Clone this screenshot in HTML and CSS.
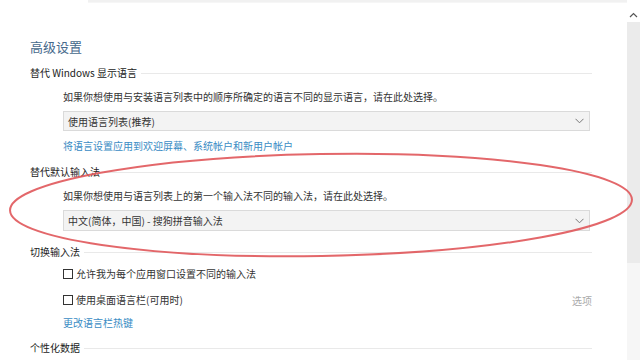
FILE: index.html
```html
<!DOCTYPE html>
<html lang="zh-CN">
<head>
<meta charset="utf-8">
<title>高级设置</title>
<link rel="stylesheet" href="styles.css">
</head>
<body>
<div class="window">
  <main class="main">
    <div class="topstrip"></div>
    <h1 class="title">高级设置</h1>

    <div class="group-head"><span>替代 Windows 显示语言</span><i class="rule"></i></div>
    <p class="desc">如果你想使用与安装语言列表中的顺序所确定的语言不同的显示语言，请在此处选择。</p>
    <div class="select s1"><span>使用语言列表(推荐)</span>
      <svg class="chev" width="9" height="6" viewBox="0 0 9 6"><path d="M0.5 0.8 L4.5 4.8 L8.5 0.8" fill="none" stroke="#777" stroke-width="1"/></svg>
    </div>
    <a class="link l1">将语言设置应用到欢迎屏幕、系统帐户和新用户帐户</a>

    <div class="group-head g2"><span>替代默认输入法</span><i class="rule"></i></div>
    <p class="desc">如果你想使用与语言列表上的第一个输入法不同的输入法，请在此处选择。</p>
    <div class="select s2"><span>中文(简体，中国) - 搜狗拼音输入法</span>
      <svg class="chev" width="9" height="6" viewBox="0 0 9 6"><path d="M0.5 0.8 L4.5 4.8 L8.5 0.8" fill="none" stroke="#777" stroke-width="1"/></svg>
    </div>

    <div class="group-head g3"><span>切换输入法</span><i class="rule"></i></div>
    <label class="check c1"><i class="box"></i><span>允许我为每个应用窗口设置不同的输入法</span></label>
    <div class="check-row">
      <label class="check c2"><i class="box"></i><span>使用桌面语言栏(可用时)</span></label>
      <span class="options">选项</span>
    </div>
    <a class="link l2">更改语言栏热键</a>

    <div class="group-head g4"><span>个性化数据</span><i class="rule"></i></div>
  </main>
  <aside class="scrollbar">
    <div class="arrow">
      <svg width="9" height="6" viewBox="0 0 9 6"><path d="M1 5 L4.5 1.5 L8 5" fill="none" stroke="#555" stroke-width="1.2"/></svg>
    </div>
    <div class="thumb"></div>
    <div class="track"></div>
  </aside>
  <svg class="mark" width="640" height="360" viewBox="0 0 640 360">
    <ellipse cx="321" cy="205" rx="311" ry="51" transform="rotate(-1 321 205)" fill="none" stroke="#e0565a" stroke-width="2" stroke-opacity="0.9"/>
  </svg>
</div>
</body>
</html>
```

FILE: styles.css
```css
* { box-sizing: border-box; }
html, body { margin: 0; padding: 0; background: #fff; }
body {
  font-family: "Noto Sans CJK SC", "Noto Sans", "Liberation Sans", sans-serif;
  font-size: 10px;
  color: #333;
}
.window {
  position: relative;
  width: 640px;
  height: 360px;
  overflow: hidden;
  display: flex;
}
.main {
  flex: 1;
  padding: 0 35px 0 30px;
  display: flex;
  flex-direction: column;
}
.topstrip {
  height: 3px;
  margin: 0 -40px 0 58px;
  background: #f1f1f1;
  border-bottom: 1px solid #f6f6f6;
}
.title {
  margin: 34px 0 0;
  font-size: 13px;
  line-height: 20px;
  font-weight: normal;
  color: #46698c;
}
.group-head {
  display: flex;
  align-items: center;
  height: 16px;
  line-height: 16px;
  margin-top: 8px;
  color: #222;
}
.group-head .rule {
  flex: 1;
  height: 1px;
  background: #e9e9e9;
  margin-left: 4px;
}
.g2 { margin-top: 10px; }
.g3 { margin-top: 13px; }
.g4 { margin-top: 9px; }
.desc {
  margin: 8px 0 0 33px;
  line-height: 16px;
  color: #333;
}
.select {
  margin: 6px 2px 0 33px;
  height: 20px;
  border: 1px solid #dadada;
  background: #f3f3f3;
  display: flex;
  align-items: center;
  justify-content: space-between;
  padding: 0 5px 0 4px;
  color: #333;
}
.s2 { height: 21px; }
.chev { display: block; }
.link {
  display: block;
  margin: 7px 0 0 33px;
  line-height: 16px;
  color: #3a8cc4;
}
.l2 { margin-top: 7px; }
.check {
  display: flex;
  align-items: center;
  gap: 3px;
  margin: 6px 0 0 33px;
  line-height: 16px;
  color: #333;
}
.box {
  width: 10px;
  height: 10px;
  border: 1px solid #333;
  background: #fff;
}
.check-row {
  display: flex;
  align-items: center;
  justify-content: space-between;
  margin-top: 9px;
}
.check-row .check { margin-top: 0; }
.options { color: #aaa; margin-top: 2px; }
.scrollbar {
  width: 13px;
  display: flex;
  flex-direction: column;
}
.arrow {
  height: 22px;
  display: flex;
  justify-content: center;
  padding-top: 12px;
  background: #fff;
}
.arrow svg { display: block; }
.thumb {
  height: 241px;
  background: #ebebeb;
}
.track {
  flex: 1;
  background: #f6f6f6;
}
.mark {
  position: absolute;
  left: 0;
  top: 0;
  pointer-events: none;
}
```
